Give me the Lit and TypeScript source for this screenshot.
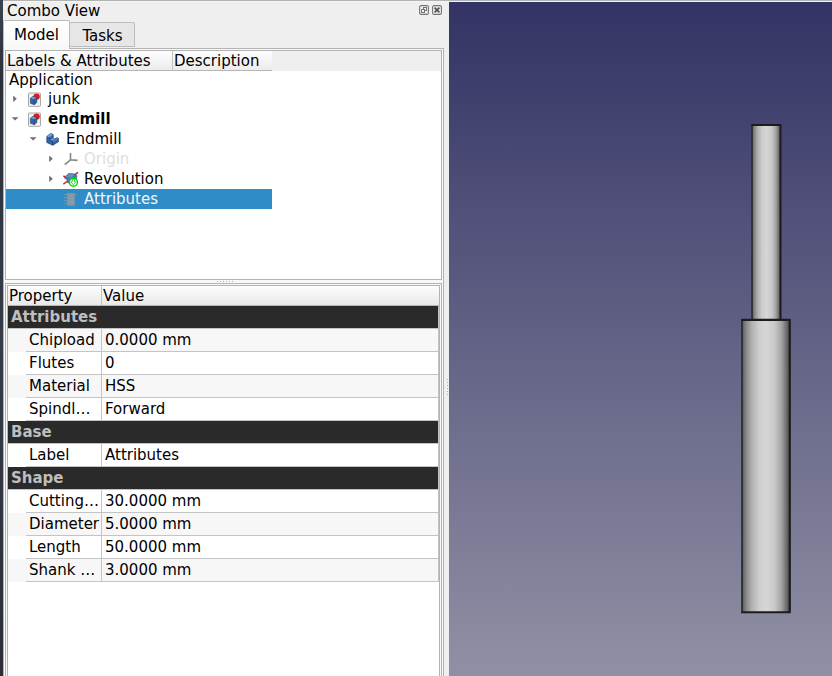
import { LitElement, html, css, svg, nothing } from "lit";
import { customElement } from "lit/decorators.js";
import { classMap } from "lit/directives/class-map.js";

type IconName = "doc" | "body" | "origin" | "revolution" | "attributes";

interface TreeNode {
  label: string;
  depth: number;
  icon: IconName;
  arrow?: "open" | "closed";
  bold?: boolean;
  hidden?: boolean;
  selected?: boolean;
}

const TREE: TreeNode[] = [
  { label: "junk", depth: 0, icon: "doc", arrow: "closed" },
  { label: "endmill", depth: 0, icon: "doc", arrow: "open", bold: true },
  { label: "Endmill", depth: 1, icon: "body", arrow: "open" },
  { label: "Origin", depth: 2, icon: "origin", arrow: "closed", hidden: true },
  { label: "Revolution", depth: 2, icon: "revolution", arrow: "closed" },
  { label: "Attributes", depth: 2, icon: "attributes", selected: true },
];

interface Row { name: string; value?: string; shade?: boolean }

const ROWS: Row[] = [
  { name: "Attributes" },
  { name: "Chipload", value: "0.0000 mm", shade: true },
  { name: "Flutes", value: "0" },
  { name: "Material", value: "HSS", shade: true },
  { name: "Spindl…", value: "Forward" },
  { name: "Base" },
  { name: "Label", value: "Attributes" },
  { name: "Shape" },
  { name: "Cutting…", value: "30.0000 mm" },
  { name: "Diameter", value: "5.0000 mm", shade: true },
  { name: "Length", value: "50.0000 mm" },
  { name: "Shank …", value: "3.0000 mm", shade: true },
];

const ICONS = {
  doc: svg`
    <rect x="1.5" y="2" width="12" height="13.3" rx=".6" fill="#f1f1f1" stroke="#a8a8a8"/>
    <circle cx="9.6" cy="5.6" r="3.2" fill="#dc1a20"/>
    <path d="M3.4 7.2l2.4-1.7 4 1v5l-2.4 2.2-4-1.4z" fill="#3465a4" stroke="#1d3c66" stroke-width=".6"/>
    <path d="M3.7 7.2l2.2-1.4 3.5.9-2.2 1.5z" fill="#6d9bd2"/>
    <path d="M7.3 8.3v5.2" stroke="#1d3c66" stroke-width=".6"/>`,
  body: svg`
    <path d="M1.8 5.4l4-3 2.4 1v3.8l1.6.7 2.3-1.2 1.3.6v3.5l-5.6 3.5-6-2.8z" fill="#3465a4" stroke="#1d3c66" stroke-width=".7"/>
    <path d="M2.2 5.4l3.7-2.6 2 .8-3.4 2.7zM5 8.8l3-1.5 1.7.9-2.6 1.6zM8 10.4l4.2-3 .9.4-4.8 3.2z" fill="#78a5d8"/>
    <path d="M4.6 6.4v2.4l3.2 1.8v3.4" fill="none" stroke="#1d3c66" stroke-width=".7"/>`,
  origin: svg`
    <path d="M7.5 2v6.8l7 .6M7.5 8.8L1.8 13.7" fill="none" stroke="#868686" stroke-width="1.6"/>`,
  revolution: svg`
    <path d="M.4 13.2L4.5 10M11 4.4l4-3M.4 5l3 1.4" stroke="#d42028" stroke-width="1.4"/>
    <path d="M1.8 6L5.8 2.4l6 .6 2 1.6-.4 4.2-4.2 3.6-4.6-.6C5 9.6 3.6 7.6 1.8 7.4z" fill="#4878b0" stroke="#34608f" stroke-width=".7"/>
    <path d="M2.4 6L6 2.9l5.4.5-3.2 3.4z" fill="#6390c4"/>
    <circle cx="10.4" cy="11.2" r="4" fill="#fff" stroke="#08d608" stroke-width="1.5"/>
    <path d="M9.3 8.4h2.2v2.6h1.3l-2.4 2.8L8 11h1.3z" fill="#fff" stroke="#08d608" stroke-width=".8"/>`,
  attributes: svg`
    <path d="M1.4 3.6h3M.6 6.6h4M.6 9.8h4M1.4 12.8h3M11 3.6h2.6" stroke="#7b93a7" stroke-width="1.1"/>
    <rect x="4.4" y="2.3" width="7.2" height="12.2" fill="#879aa8" stroke="#7d93a4" stroke-width=".6"/>`,
};

@customElement("model-tree")
class ModelTree extends LitElement {
  static styles = css`
    :host { display: block; box-sizing: border-box; height: 230px; width: 437px; border: 1px solid #b3b3b3; background: #fff; }
    .head { display: flex; height: 20px; background: #efefef; line-height: 20px; }
    .cell { box-sizing: border-box; height: 20px; border-bottom: 1px solid #b5b5b5; background: linear-gradient(#fdfdfd, #ececec); padding-left: 1px; white-space: nowrap; }
    .labels { width: 167px; border-right: 1px solid #c4c4c4; }
    .desc { width: 99px; }
    .root { height: 18px; line-height: 18px; padding-left: 3px; }
    .row { display: flex; align-items: center; box-sizing: border-box; width: 266px; height: 20px; line-height: 20px; }
    .d1 { padding-left: 18px; }
    .d2 { padding-left: 36px; }
    .arrow { width: 21px; height: 20px; flex: none; }
    .icon { width: 16px; height: 16px; flex: none; margin-right: 5px; }
    .bold { font-weight: bold; }
    .hidden { color: #dedede; }
    .selected { background: #308cc6; color: #f2f6fa; }
  `;

  render() {
    return html`
      <div class="head"><div class="cell labels">Labels &amp; Attributes</div><div class="cell desc">Description</div></div>
      <div class="root">Application</div>
      ${TREE.map((n) => html`
        <div class=${classMap({ row: true, d1: n.depth === 1, d2: n.depth === 2, bold: !!n.bold, hidden: !!n.hidden, selected: !!n.selected })}>
          <svg class="arrow" viewBox="0 0 21 20">
            ${n.arrow === "closed" ? svg`<path d="M7.2 6.6v6.4l3.6-3.2z" fill="#707070"/>`
              : n.arrow === "open" ? svg`<path d="M5.6 8.2h7l-3.5 3.2z" fill="#707070"/>` : nothing}
          </svg>
          <svg class="icon" viewBox="0 0 16 16">${ICONS[n.icon]}</svg>
          <span>${n.label}</span>
        </div>`)}
    `;
  }
}

@customElement("property-table")
class PropertyTable extends LitElement {
  static styles = css`
    :host { display: block; box-sizing: border-box; width: 437px; flex: 1; border: 1px solid #b3b3b3; border-bottom: 0; background: #f8f8f8; padding: 1px 1px 0; }
    .frame { box-sizing: border-box; height: 100%; border: 1px solid #b3b3b3; border-bottom: 0; background: #fff; }
    .head { display: flex; box-sizing: border-box; height: 20px; line-height: 20px; border-bottom: 1px solid #b5b5b5; background: linear-gradient(#fdfdfd, #e9e9e9); }
    .head .name { padding-left: 1px; border-right: 1px solid #c4c4c4; box-sizing: border-box; width: 94px; }
    .head .value { padding-left: 1px; }
    .row, .group { box-sizing: border-box; height: 23px; line-height: 22px; border-right: 1px solid #c4c4c4; }
    .group { background: #2a2a2a; color: #bebebe; font-weight: bold; padding-left: 3px; border-bottom: 1px solid #c4c4c4; }
    .row { display: grid; grid-template-columns: 18px 76px 1fr; white-space: nowrap; }
    .row.shade { background: #f7f7f7; }
    .row .name { border-right: 1px solid #c4c4c4; border-bottom: 1px solid #c4c4c4; padding-left: 3px; }
    .row .value { border-bottom: 1px solid #c4c4c4; padding-left: 3px; }
  `;

  render() {
    return html`
      <div class="frame">
        <div class="head"><div class="name">Property</div><div class="value">Value</div></div>
        ${ROWS.map((r) => r.value === undefined
          ? html`<div class="group">${r.name}</div>`
          : html`<div class=${classMap({ row: true, shade: !!r.shade })}>
              <span></span><div class="name">${r.name}</div><div class="value">${r.value}</div>
            </div>`)}
      </div>`;
  }
}

@customElement("model-viewport")
class ModelViewport extends LitElement {
  static styles = css`
    :host { display: block; width: 383px; height: 674px; background: linear-gradient(#333365, #9090a5); }
    svg { display: block; }
  `;

  render() {
    return html`
      <svg width="383" height="674" viewBox="449 2 383 674">
        <defs>
          <linearGradient id="metal">
            <stop offset="0" stop-color="#555"/>
            <stop offset=".08" stop-color="#858585"/>
            <stop offset=".2" stop-color="#b0b0b0"/>
            <stop offset=".35" stop-color="#cdcdcd"/>
            <stop offset=".5" stop-color="#d6d6d6"/>
            <stop offset=".68" stop-color="#c8c8c8"/>
            <stop offset=".82" stop-color="#a4a4a4"/>
            <stop offset=".93" stop-color="#6c6c6c"/>
            <stop offset="1" stop-color="#404040"/>
          </linearGradient>
        </defs>
        <rect x="752" y="125" width="29" height="195" fill="url(#metal)"/>
        <path d="M752 320V125" stroke="#2b2b2e" stroke-width="1.6"/>
        <path d="M751.2 124.9H781M780.5 124V320" fill="none" stroke="#1c1c1e" stroke-width="2"/>
        <rect x="742" y="320" width="48" height="292" fill="url(#metal)"/>
        <path d="M742 612V320" stroke="#2b2b2e" stroke-width="1.7"/>
        <path d="M741.1 319.9H790.6M789.8 319V612.4M741.1 612.2H790.8" fill="none" stroke="#1c1c1e" stroke-width="2.1"/>
      </svg>`;
  }
}

@customElement("app-root")
class AppRoot extends LitElement {
  static styles = css`
    :host { display: flex; box-sizing: border-box; width: 832px; height: 676px; overflow: hidden; background: #efefef; font: 15px "DejaVu Sans", sans-serif; color: #000; }
    .edge { width: 3px; background: linear-gradient(#3b4350, #2b2f3a 12%, #353c49 50%, #2b2e39); }
    .main { display: flex; flex-direction: column; flex: 1; min-width: 0; }
    .top { height: 1px; background: #b3b3b3; border-bottom: 1px solid #f5f5f5; flex: none; }
    .body { display: flex; flex: 1; min-height: 0; }
    .dock { display: flex; flex-direction: column; width: 441px; }
    .title { display: flex; align-items: center; height: 18px; padding: 0 2px 0 4px; line-height: 18px; flex: none; }
    .title span { flex: 1; }
    .title svg { width: 23px; height: 10px; margin-bottom: 2px; }
    .tabs { display: flex; align-items: flex-start; height: 28px; flex: none; }
    .tab { box-sizing: border-box; border: 1px solid #bcbcbc; border-radius: 2px 2px 0 0; text-align: center; }
    .active { width: 67px; height: 29px; line-height: 28px; background: linear-gradient(#fff, #f8f8f8); border-bottom: 0; z-index: 1; }
    .idle { width: 65px; height: 25px; margin-top: 2px; line-height: 26px; padding-left: 1px; background: #e6e6e6; border-left: 0; }
    .pane { display: flex; flex-direction: column; box-sizing: border-box; flex: 1; width: 441px; border: 1px solid #b3b3b3; border-bottom: 0; padding: 1px 1px 0; min-height: 0; background: #f8f8f8; }
    .split { height: 3px; display: flex; justify-content: center; align-items: center; flex: none; padding-left: 2px; }
    .grip { box-sizing: border-box; width: 5px; display: flex; flex-direction: column; justify-content: center; align-items: flex-end; padding: 96px 1px 0 0; }
  `;

  render() {
    return html`
      <div class="edge"></div>
      <div class="main">
        <div class="top"></div>
        <div class="body">
          <div class="dock">
            <div class="title">
              <span>Combo View</span>
              <svg viewBox="0 0 23 10" fill="none" stroke="#77776f">
                <rect x=".6" y=".6" width="8.8" height="8.8" rx="1.5" stroke-width="1.1" stroke="#747474"/>
                <rect x="4.5" y="2.5" width="3" height="3"/>
                <rect x="2.5" y="4.5" width="3" height="3" fill="#efefef"/>
                <rect x="13.6" y=".6" width="8.8" height="8.8" rx="1.5" stroke-width="1.1" stroke="#747474"/>
                <path d="M15.6 2.6l4.8 4.8M20.4 2.6l-4.8 4.8" stroke="#555" stroke-width="1.8"/>
              </svg>
            </div>
            <div class="tabs"><div class="tab active">Model</div><div class="tab idle">Tasks</div></div>
            <div class="pane">
              <model-tree></model-tree>
              <div class="split">
                <svg width="16" height="1"><path d="M0 .5h16" stroke="#b0b0b0" stroke-dasharray="1 2"/></svg>
              </div>
              <property-table></property-table>
            </div>
          </div>
          <div class="grip">
            <svg width="1" height="16"><path d="M.5 0v16" stroke="#b0b0b0" stroke-dasharray="1 2"/></svg>
          </div>
          <model-viewport></model-viewport>
        </div>
      </div>`;
  }
}
